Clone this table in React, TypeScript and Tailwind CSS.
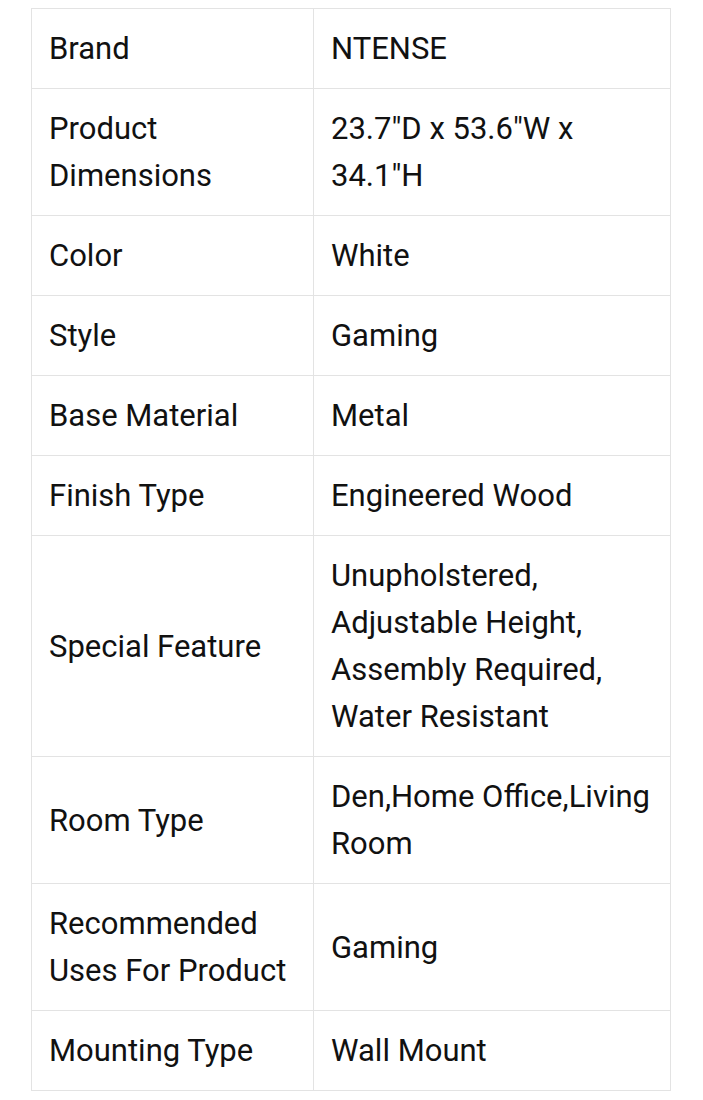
const rows: [string, string][] = [
  ["Brand", "NTENSE"],
  ["Product Dimensions", "23.7\"D x 53.6\"W x 34.1\"H"],
  ["Color", "White"],
  ["Style", "Gaming"],
  ["Base Material", "Metal"],
  ["Finish Type", "Engineered Wood"],
  ["Special Feature", "Unupholstered, Adjustable Height, Assembly Required, Water Resistant"],
  ["Room Type", "Den,Home Office,Living Room"],
  ["Recommended Uses For Product", "Gaming"],
  ["Mounting Type", "Wall Mount"],
];

export default function App() {
  return (
    <div className="min-h-screen bg-white pt-[8px] pl-[31px] font-['Roboto',sans-serif] text-[#111]">
      <table className="w-[640px] table-fixed border-collapse text-[31px] leading-[47px]">
        <colgroup>
          <col className="w-[282px]" />
          <col />
        </colgroup>
        <tbody>
          {rows.map(([k, v]) => (
            <tr key={k}>
              <td className="border border-[#e3e3e3] px-[17px] py-[16px] align-middle">{k}</td>
              <td className="border border-[#e3e3e3] px-[17px] py-[16px] align-middle">{v}</td>
            </tr>
          ))}
        </tbody>
      </table>
    </div>
  );
}
